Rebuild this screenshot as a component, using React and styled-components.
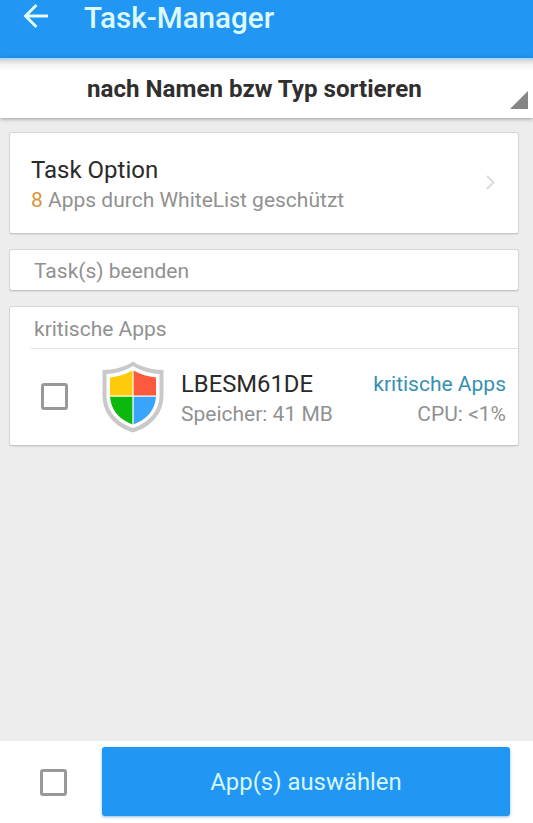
import React from 'react'
import styled, { createGlobalStyle } from 'styled-components'

export default () => {
  return (
    <Screen>
      <GlobalStyle />
      <Header>
        <BackArrow viewBox="0 0 26 26">
          <path d="M13.5 2 L2.5 13 L13.5 24 M2.5 13 H25" />
        </BackArrow>
        <Title>Task-Manager</Title>
      </Header>
      <SortBar>
        <SortLabel>nach Namen bzw Typ sortieren</SortLabel>
        <SortCorner viewBox="0 0 18 18">
          <path d="M18 0 V18 H0 Z" />
        </SortCorner>
      </SortBar>

      <Content>
        <OptionCard>
          <OptionInfo>
            <OptionTitle>Task Option</OptionTitle>
            <OptionText>
              <Count>8</Count> Apps durch WhiteList geschützt
            </OptionText>
          </OptionInfo>
          <Chevron viewBox="0 0 9 15">
            <path d="M1 1 L7.5 7.5 L1 14" />
          </Chevron>
        </OptionCard>

        <Card>
          <CardHeading>Task(s) beenden</CardHeading>
        </Card>

        <Card>
          <CardHeading $divided>kritische Apps</CardHeading>
          <AppRow>
            <Checkbox />
            <ShieldIcon />
            <AppInfo>
              <AppName>LBESM61DE</AppName>
              <AppDetail>Speicher: 41 MB</AppDetail>
            </AppInfo>
            <AppStatus>
              <AppTag>kritische Apps</AppTag>
              <AppDetail>CPU: &lt;1%</AppDetail>
            </AppStatus>
          </AppRow>
        </Card>
      </Content>

      <Footer>
        <Checkbox />
        <SelectButton>App(s) auswählen</SelectButton>
      </Footer>
    </Screen>
  )
}

const ShieldIcon = () => (
  <Shield viewBox="0 0 62 72">
    <path
      d="M31 0.5 C39 6 50 9 61.5 9 V34 C61.5 53 49 66 31 71.5 C13 66 0.5 53 0.5 34 V9 C12 9 23 6 31 0.5 Z"
      fill="#c9c9c9"
    />
    <path
      d="M31 5 C39 10 48 12.5 57.5 13 V34 C57.5 50 47 61.5 31 67 C15 61.5 4.5 50 4.5 34 V13 C14 12.5 23 10 31 5 Z"
      fill="#fff"
    />
    <path d="M30.4 9.5 C23 13.5 16 15.5 8 16.5 V34.5 H30.4 Z" fill="#fdcb0a" />
    <path d="M31.6 9.5 C39 13.5 46 15.5 54 16.5 V34.5 H31.6 Z" fill="#fb5a3c" />
    <path d="M8 35.8 H30.4 V63.5 C17 58.5 9 49 8 35.8 Z" fill="#0cb80c" />
    <path d="M54 35.8 H31.6 V63.5 C45 58.5 53 49 54 35.8 Z" fill="#38a4fb" />
  </Shield>
)

const GlobalStyle = createGlobalStyle`
  * {
    box-sizing: border-box;
  }

  body {
    margin: 0;
    font-family: Roboto, 'Liberation Sans', sans-serif;
    background: #ededed;
  }
`

const Screen = styled.div`
  height: 823px;
  display: flex;
  flex-direction: column;
  overflow: hidden;
  background: #ededed;
`

const Header = styled.header`
  flex: none;
  height: 58px;
  padding: 0 23px;
  display: flex;
  align-items: flex-start;
  background: #2196f3;
`

const BackArrow = styled.svg`
  width: 26px;
  height: 26px;
  margin: 3px 35px 0 0;
  fill: none;
  stroke: #e2fbff;
  stroke-width: 2.9;
`

const Title = styled.h1`
  margin: 0;
  font-size: 29.6px;
  font-weight: 500;
  line-height: 37px;
  color: #dcfaff;
`

const SortBar = styled.div`
  flex: none;
  height: 60px;
  padding: 0 5px 9px 87px;
  display: flex;
  align-items: flex-end;
  justify-content: space-between;
  border-top: 2px solid #b2d8f6;
  background: linear-gradient(to bottom, #d9d9d9, #f5f5f5 5px, #fff 11px);
  box-shadow: 0 1px 4px rgba(0, 0, 0, 0.35);
`

const SortLabel = styled.div`
  font-size: 24.15px;
  font-weight: 700;
  line-height: 40px;
  color: #2f2f2f;
`

const SortCorner = styled.svg`
  width: 18px;
  height: 18px;
  fill: #858585;
`

const Content = styled.main`
  flex: 1;
  padding: 14px 14px 0 9px;
  display: flex;
  flex-direction: column;
  gap: 15px;
`

const Card = styled.section`
  background: #fff;
  border: 1px solid #d6d6d6;
  border-bottom-color: #c6c6c6;
  border-radius: 3px;
  box-shadow: 0 1px 1px rgba(0, 0, 0, 0.08);
`

const OptionCard = styled(Card)`
  height: 102px;
  padding: 0 23px 0 21px;
  display: flex;
  align-items: center;
  justify-content: space-between;
`

const OptionInfo = styled.div`
  padding-top: 4px;
`

const OptionTitle = styled.div`
  font-size: 24px;
  line-height: 30px;
  color: #2a2a2a;
`

const OptionText = styled.div`
  font-size: 21px;
  line-height: 30px;
  color: #919191;
`

const Count = styled.span`
  color: #d9923a;
`

const Chevron = styled.svg`
  width: 9px;
  height: 15px;
  margin-bottom: 2px;
  fill: none;
  stroke: #d9d9d9;
  stroke-width: 1.8;
`

const CardHeading = styled.h2`
  margin: 0 0 0 21px;
  padding: ${({ $divided }) => ($divided ? '4px 0 0 3px' : '2px 0 0 3px')};
  font-size: 21px;
  font-weight: 400;
  line-height: ${({ $divided }) => ($divided ? '37px' : '38px')};
  color: #919191;
  border-bottom: ${({ $divided }) => ($divided ? '1px solid #e2e2e2' : 'none')};
`

const AppRow = styled.div`
  height: 96px;
  padding: 0 12px 1px 31px;
  display: flex;
  align-items: center;
`

const Checkbox = styled.div`
  flex: none;
  width: 27px;
  height: 27px;
  border: 3px solid #999;
  border-radius: 3px;
`

const Shield = styled.svg`
  flex: none;
  width: 62px;
  height: 72px;
  margin: 0 17px 0 34px;
`

const AppInfo = styled.div`
  flex: 1;
  padding-top: 4px;
`

const AppStatus = styled.div`
  padding-top: 4px;
  text-align: right;
`

const AppName = styled.div`
  font-size: 23.8px;
  line-height: 30px;
  color: #2a2a2a;
`

const AppTag = styled.div`
  font-size: 21px;
  line-height: 30px;
  color: #3690b0;
`

const AppDetail = styled.div`
  font-size: 21px;
  line-height: 30px;
  color: #919191;
`

const Footer = styled.footer`
  flex: none;
  height: 82px;
  padding: 6px 23px 7px 40px;
  display: flex;
  align-items: center;
  gap: 35px;
  background: #fff;

  ${Checkbox} {
    margin-top: 2px;
  }
`

const SelectButton = styled.button`
  flex: 1;
  height: 69px;
  padding: 0;
  border: none;
  border-radius: 3px;
  font-family: inherit;
  font-size: 23.9px;
  line-height: 30px;
  color: #d5f8ff;
  background: #2196f3;
  box-shadow: 0 1px 3px rgba(33, 120, 200, 0.5);
`
